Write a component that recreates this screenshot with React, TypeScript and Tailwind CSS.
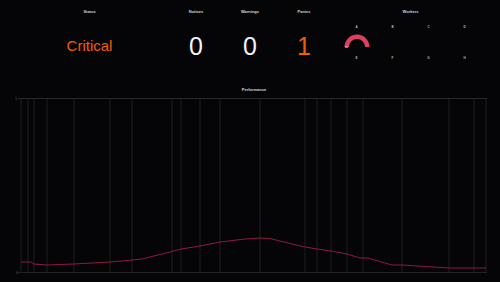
const gridX = [21, 28, 34, 47, 74, 110, 132, 172, 181, 200, 220, 260, 305, 317, 331, 347, 363, 402, 449, 474, 486];

const perf: [number, number][] = [
  [21, 262], [31, 262], [34, 264], [47, 265], [74, 264], [110, 262], [132, 260], [142, 259],
  [170, 252], [181, 249], [200, 246], [220, 242], [245, 239], [260, 238], [270, 238.5],
  [292, 244], [305, 247], [317, 249], [331, 251], [347, 254], [360, 258], [368, 258],
  [392, 265], [402, 265], [449, 268], [486, 268],
];

const counters = [
  { label: 'Notices', value: '0', color: 'text-[#f2f2f2]' },
  { label: 'Warnings', value: '0', color: 'text-[#f2f2f2]' },
  { label: 'Panics', value: '1', color: 'text-[#f25c05]' },
];

const workers = ['A', 'B', 'C', 'D', 'E', 'F', 'G', 'H'];

function Label({ children }: { children: React.ReactNode }) {
  return <div className="mt-[10px] h-[4px] text-[4px] leading-[4px] font-bold text-[#d4d4d4]">{children}</div>;
}

function Gauge() {
  return (
    <svg width="30" height="15" viewBox="0 0 30 15" className="mt-[5px]">
      <path d="M 4.75 13 A 10.25 10.25 0 0 1 25.25 13" fill="none" stroke="#d9415f" strokeWidth="4.5" />
      <rect x="3" y="12.6" width="3" height="0.9" fill="#e8e8e8" />
    </svg>
  );
}

export default function App() {
  const points = perf.map(([x, y]) => `${x},${y - 95}`).join(' ');
  return (
    <div className="w-[500px] h-[282px] overflow-hidden bg-[#050407] font-['Liberation_Sans',Arial,sans-serif]">
      <div className="flex h-[85px] px-[10px]">
        <div className="w-[159px] flex flex-col items-center">
          <Label>Status</Label>
          <div className="mt-[20px] h-[24px] leading-[24px] text-[15px] text-[#f25c05]">Critical</div>
        </div>
        {counters.map((c) => (
          <div key={c.label} className="w-[54px] flex flex-col items-center">
            <Label>{c.label}</Label>
            <div className={`mt-[20px] h-[24px] leading-[24px] text-[25px] ${c.color}`}>{c.value}</div>
          </div>
        ))}
        <div className="w-[159px] flex flex-col items-center">
          <Label>Workers</Label>
          <div className="mt-[11px] grid grid-cols-4">
            {workers.map((w, i) => (
              <div key={w} className="w-[36px] h-[31px] flex flex-col items-center">
                <div className="h-[4px] text-[3px] leading-[4px] font-bold text-[#bdbdbd]">{w}</div>
                {i === 0 && <Gauge />}
              </div>
            ))}
          </div>
        </div>
      </div>
      <div className="h-[10px] pl-[8px] text-center text-[4px] leading-[10px] font-bold text-[#d4d4d4]">Performance</div>
      <svg width="500" height="187" viewBox="0 0 500 187" className="block">
        {gridX.map((x) => (
          <line key={x} x1={x} y1={3} x2={x} y2={177} stroke="#1f1e22" strokeWidth="1" />
        ))}
        <line x1={18} y1={3.5} x2={487} y2={3.5} stroke="#29282c" strokeWidth="1" />
        <line x1={18} y1={177.5} x2={487} y2={177.5} stroke="#222125" strokeWidth="1" />
        <text x={16} y={4.5} fontSize="3" fill="#777" fontFamily="Liberation Sans, sans-serif" textAnchor="middle">1</text>
        <text x={17} y={178.5} fontSize="3" fill="#777" fontFamily="Liberation Sans, sans-serif" textAnchor="middle">0</text>
        <polyline points={points} fill="none" stroke="#a01c40" strokeWidth="0.9" />
      </svg>
    </div>
  );
}
